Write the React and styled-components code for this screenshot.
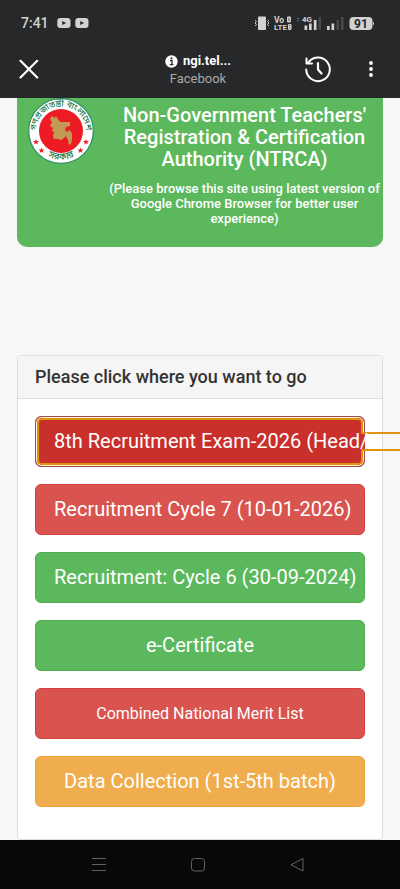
import React from 'react';
import styled, { createGlobalStyle } from 'styled-components';

const colors = {
  BAR: '#272829',
  GREEN: '#5cb85c',
  RED: '#d9534f',
  DARK_RED: '#c9302c',
  ORANGE: '#f0ad4e',
  FOCUS: '#e0930f',
  FOCUS_LIGHT: '#fff3dc',
};

const links = [
  { text: '8th Recruitment Exam-2026 (Head/', color: colors.DARK_RED, border: '#a0504a', focused: true },
  { text: 'Recruitment Cycle 7 (10-01-2026)', color: colors.RED, border: '#d43f3a' },
  { text: 'Recruitment: Cycle 6 (30-09-2024)', color: colors.GREEN, border: '#4cae4c' },
  { text: 'e-Certificate', color: colors.GREEN, border: '#4cae4c' },
  { text: 'Combined National Merit List', color: colors.RED, border: '#d43f3a', small: true },
  { text: 'Data Collection (1st-5th batch)', color: colors.ORANGE, border: '#eea236' },
];

const YoutubeIcon = () => (
  <svg width="14" height="10" viewBox="0 0 14 10">
    <rect x="0.3" width="13.2" height="10" rx="3" fill="#d2d2d2" />
    <path d="M5.200 2.900 9.200 5 5.200 7.100Z" fill={colors.BAR} />
  </svg>
);

const StatusIcons = () => (
  <svg width="120" height="18" viewBox="254 14 120 18" fill="#d2d2d2" fontFamily="Roboto, sans-serif" fontWeight="700">
    <rect x="258" y="16.500" width="8" height="13.500" rx="1" />
    <path d="M255.200 20 256.400 21.500 255.200 23 256.400 24.500 255.200 26M268.800 20 267.600 21.500 268.800 23 267.600 24.500 268.800 26" fill="none" stroke="#d2d2d2" />
    <text x="274" y="22.500" fontSize="8.500">Vo</text>
    <text x="274" y="30" fontSize="8">LTE</text>
    <rect x="287" y="16.500" width="4" height="6" rx="1" />
    <rect x="288" y="24" width="3.500" height="6" rx="1" />
    <path d="M289 18v3M289 25.500h1.200M289 28.200h1.200" stroke={colors.BAR} strokeWidth=".8" />
    <path d="M297 18h2v1h-2zM297 20.500h2v1h-2z" opacity=".4" />
    <text x="302" y="22" fontSize="8">4G</text>
    <path d="M304.500 25.500h2.700v4.500h-2.700zM309 23.500h2.700v6.500h-2.700zM313.800 20h2.700v10h-2.700zM327 26h2.700v4h-2.700zM331.500 23.500h2.700v6.500h-2.700z" />
    <path d="M318.500 17h2.500v13h-2.500zM336.500 20h2.500v10h-2.500zM341 17h2.500v13h-2.500z" opacity=".2" />
    <rect x="349.500" y="17" width="23" height="13" rx="4" />
    <path d="M373 21.500a2.500 2.500 0 0 1 0 4z" />
    <text x="361" y="28" fontSize="12" textAnchor="middle" fill={colors.BAR}>91</text>
  </svg>
);

const CloseIcon = () => (
  <svg width="20" height="20" viewBox="0 0 20 20" fill="none" stroke="#fff" strokeWidth="2.200" strokeLinecap="round">
    <path d="M1.500 1.800 18.200 18.500M18.200 1.800 1.500 18.500" />
  </svg>
);

const HistoryIcon = () => (
  <svg width="28" height="28" viewBox="0 0 28 28" fill="none" stroke="#fff" strokeWidth="2" strokeLinecap="round" strokeLinejoin="round">
    <path d="M2.200 14.500A11.800 11.800 0 1 0 4 8" />
    <path d="M2.500 3.500V8.500H8" />
    <path d="M14 8V14.500L17.500 18.500" strokeWidth="2.200" />
  </svg>
);

const DotsIcon = () => (
  <svg width="12" height="16" viewBox="0 0 12 16" fill="#fff">
    <circle cx="6" cy="2" r="1.900" />
    <circle cx="6" cy="8" r="1.900" />
    <circle cx="6" cy="14" r="1.900" />
  </svg>
);

const InfoIcon = () => (
  <svg width="13" height="13" viewBox="0 0 13 13">
    <circle cx="6.500" cy="6.500" r="6.200" fill="#fff" />
    <path d="M5 5.500H7V9.500M4.800 9.700H8.400" fill="none" stroke={colors.BAR} strokeWidth="1.300" />
    <circle cx="6.500" cy="3.300" r="1" fill={colors.BAR} />
  </svg>
);

const star = 'M0-3 .8-1 3-.9 1.300.5 1.900 2.600 0 1.300-1.900 2.600-1.300.5-3-.9-.8-1Z';

const Emblem = () => (
  <svg width="66" height="66" viewBox="-33 -33 66 66">
    <defs>
      <path id="arcTop" d="M-23.800 7A24.800 24.800 0 1 1 23.800 7" />
      <path id="arcBottom" d="M-20 20.500A28.700 28.700 0 0 0 20 20.500" />
    </defs>
    <circle r="32.300" fill="#fff" stroke="#2f8f6b" strokeWidth="1.200" />
    <circle r="22" fill="#ed1c24" />
    <path
      d="M-9-15-6-13-5-15-3-12-1-9 3-9 9-9 9-5 5-4 4-1 6 1 9-1 11 3 11 8 10 13 8 14 7 9 5 5 3 7 0 9-3 8-7 8-8 5-7 1-9 0-8-3-11-5-9-9-11-12Z"
      fill="#c39a55"
    />
    <g fill="#16794a" fontFamily="'Noto Sans Bengali', 'Noto Sans', sans-serif" fontWeight="500">
      <text textAnchor="middle" fontSize="8.500">
        <textPath href="#arcTop" startOffset="50%">গণপ্রজাতন্ত্রী বাংলাদেশ</textPath>
      </text>
      <text textAnchor="middle" fontSize="9.500">
        <textPath href="#arcBottom" startOffset="50%">সরকার</textPath>
      </text>
    </g>
    <g fill="#ed1c24">
      <path d={star} transform="translate(-25 11)" />
      <path d={star} transform="translate(-19.500 19.500)" />
      <path d={star} transform="translate(25 11)" />
      <path d={star} transform="translate(19.500 19.500)" />
    </g>
  </svg>
);

const App = () => {
  return (
    <Container>
      <GlobalStyle />
      <StatusBar>
        <Time>7:41</Time>
        <YoutubeIcon />
        <YoutubeIcon />
        <StatusRight>
          <StatusIcons />
        </StatusRight>
      </StatusBar>

      <BrowserBar>
        <IconButton aria-label="Close">
          <CloseIcon />
        </IconButton>
        <Address>
          <Host>
            <InfoIcon />
            ngi.tel...
          </Host>
          <Source>Facebook</Source>
        </Address>
        <Actions>
          <IconButton aria-label="History">
            <HistoryIcon />
          </IconButton>
          <IconButton aria-label="More">
            <DotsIcon />
          </IconButton>
        </Actions>
      </BrowserBar>

      <Page>
        <Banner>
          <Emblem />
          <BannerText>
            <Title>Non-Government Teachers' Registration &amp; Certification Authority (NTRCA)</Title>
            <Notice>
              (Please browse this site using latest version of
              <br />
              Google Chrome Browser for better user experience)
            </Notice>
          </BannerText>
        </Banner>

        <Panel>
          <PanelTitle>Please click where you want to go</PanelTitle>
          <LinkList>
            {links.map((link) => (
              <LinkBtn key={link.text} href="#" $color={link.color} $border={link.border} $small={link.small}>
                {link.focused && (
                  <>
                    <FocusRing />
                    <FocusTail $color={link.color} />
                  </>
                )}
                <Label>{link.text}</Label>
              </LinkBtn>
            ))}
          </LinkList>
        </Panel>
      </Page>

      <NavBar>
        <IconButton aria-label="Recent apps">
          <svg width="16" height="16" viewBox="0 0 16 16" stroke="#626262" fill="none">
            <path d="M1 1.500H15M1 7.500H15M1 13.500H15" />
          </svg>
        </IconButton>
        <IconButton aria-label="Home">
          <svg width="16" height="16" viewBox="0 0 16 16" stroke="#626262" fill="none">
            <rect x="1.500" y="1.500" width="13" height="12.500" rx="3" />
          </svg>
        </IconButton>
        <IconButton aria-label="Back">
          <svg width="16" height="16" viewBox="0 0 16 16" stroke="#626262" fill="none" strokeLinejoin="round">
            <path d="M14 1.500V14L2 7.800Z" />
          </svg>
        </IconButton>
      </NavBar>
    </Container>
  );
};

export default App;

const GlobalStyle = createGlobalStyle`
  * {
    box-sizing: border-box;
  }

  body {
    margin: 0;
    background-color: #f7f7f7;
    font-family: Roboto, 'Liberation Sans', sans-serif;
  }

  svg {
    display: block;
    flex-shrink: 0;
  }
`;

const Container = styled.div`
  min-height: 100vh;
  display: flex;
  flex-direction: column;
  overflow: hidden;
`;

const StatusBar = styled.div`
  height: 46px;
  padding: 0 26px 0 21px;
  display: flex;
  align-items: center;
  gap: 4px;
  background-color: ${colors.BAR};
`;

const Time = styled.span`
  margin-right: 4px;
  font-size: 14px;
  font-weight: 500;
  color: #d2d2d2;
`;

const StatusRight = styled.div`
  margin-left: auto;
`;

const BrowserBar = styled.header`
  height: 52px;
  padding: 0 23px 6px 19px;
  display: grid;
  grid-template-columns: 1fr auto 1fr;
  align-items: center;
  background-color: ${colors.BAR};
`;

const IconButton = styled.button`
  padding: 0;
  border: 0;
  background: none;
  cursor: pointer;
  justify-self: start;
`;

const Address = styled.div`
  padding-top: 2px;
  text-align: center;
`;

const Host = styled.div`
  display: flex;
  align-items: center;
  gap: 5px;
  font-size: 13px;
  line-height: 18px;
  font-weight: 700;
  color: #fff;
`;

const Source = styled.div`
  font-size: 13px;
  line-height: 18px;
  color: #a9a9a9;
`;

const Actions = styled.div`
  display: flex;
  align-items: center;
  justify-content: flex-end;
  gap: 33px;
`;

const Page = styled.main`
  flex: 1;
  padding: 0 17px;
  display: flex;
  flex-direction: column;
`;

const Banner = styled.section`
  padding: 0 0 21px 11px;
  display: flex;
  align-items: flex-start;
  gap: 12px;
  border-radius: 0 0 10px 10px;
  background-color: ${colors.GREEN};
  color: #fff;
  text-align: center;
`;

const BannerText = styled.div`
  flex: 1;
  min-width: 0;
`;

const Title = styled.h1`
  margin: 6px 0 11px;
  font-size: 20px;
  line-height: 22px;
  font-weight: 500;
`;

const Notice = styled.p`
  margin: 0;
  font-size: 13px;
  line-height: 15px;
  font-weight: 500;
`;

const Panel = styled.section`
  flex: 1;
  margin-top: 108px;
  border: 1px solid #ddd;
  border-radius: 4px;
  background-color: #fff;
`;

const PanelTitle = styled.h2`
  margin: 0;
  padding: 10px 17px;
  border-bottom: 1px solid #ddd;
  border-radius: 4px 4px 0 0;
  background-color: #f5f5f5;
  font-size: 18px;
  line-height: 22px;
  font-weight: 500;
  color: #333;
`;

const LinkList = styled.nav`
  padding: 17px 17px 32px;
  display: flex;
  flex-direction: column;
  gap: 17px;
`;

const LinkBtn = styled.a`
  position: relative;
  padding: 0 18px;
  border: 1px solid ${(props) => props.$border};
  border-radius: 6px;
  background-color: ${(props) => props.$color};
  font-size: ${(props) => (props.$small ? '16px' : '20px')};
  line-height: 49px;
  color: #fff;
  text-align: center;
  text-decoration: none;
  white-space: nowrap;
`;

const Label = styled.span`
  position: relative;
`;

const FocusRing = styled.span`
  position: absolute;
  inset: 1px;
  border: 2px solid ${colors.FOCUS};
  border-radius: 5px;
  box-shadow: 0 0 0 1px ${colors.FOCUS_LIGHT};
`;

// the focus outline also goes round the part of the label that runs past the button
const FocusTail = styled.span`
  position: absolute;
  top: 15px;
  left: calc(100% - 3px);
  width: 100vw;
  height: 19px;
  border: 2px solid ${colors.FOCUS};
  border-width: 2px 0;
  background: linear-gradient(to right, ${(props) => props.$color} 4px, transparent 4px);
`;

const NavBar = styled.footer`
  height: 49px;
  padding: 0 12px 0 8px;
  display: flex;
  align-items: center;
  justify-content: space-evenly;
  background-color: #070909;
`;
